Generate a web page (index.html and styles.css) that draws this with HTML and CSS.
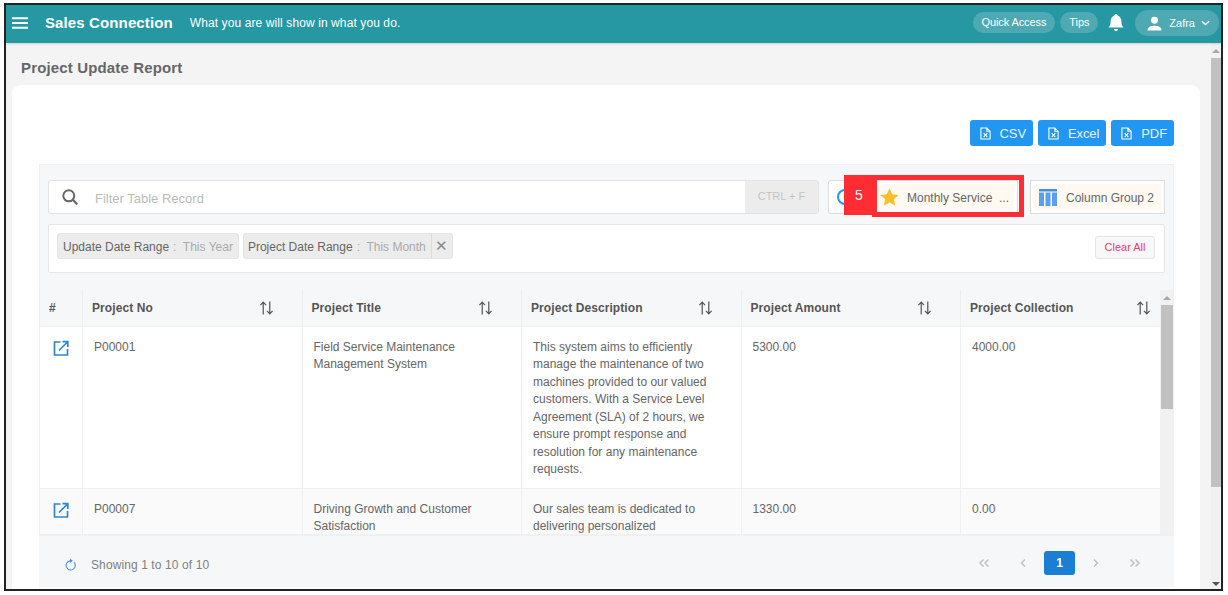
FILE: index.html
```html
<!DOCTYPE html>
<html lang="en">
<head>
    <meta charset="UTF-8">
    <title>Project Update Report</title>
    <link rel="stylesheet" href="styles.css">
</head>
<body>

<svg class="defs" width="0" height="0">
    <symbol id="sort" viewBox="0 0 16 16">
        <path d="M4.5 15V2M1.5 5l3-3.2 3 3.2M11.5 1v13M8.5 11l3 3.2 3-3.2" fill="none" stroke="currentColor" stroke-width="1.3"/>
    </symbol>
    <symbol id="open" viewBox="0 0 16 16">
        <path d="M7.5 1.5H1.5v13h13v-6M6 10l8-8M9.5 1.2h5.3v5.3" fill="none" stroke="currentColor" stroke-width="1.7"/>
    </symbol>
    <symbol id="file" viewBox="0 0 12 14">
        <path d="M1 1h6.5L11 4.5V13H1zM7.5 1v3.5H11" fill="none" stroke="currentColor" stroke-width="1.2"/>
        <path d="M4 6.5l4 4.5M8 6.5l-4 4.5" fill="none" stroke="currentColor" stroke-width="1.2"/>
    </symbol>
    <symbol id="first" viewBox="0 0 11 8">
        <path d="M4.500 .5L1 4l3.500 3.500M9.500 .5L6 4l3.500 3.500" fill="none" stroke="currentColor" stroke-width="1.500"/>
    </symbol>
    <symbol id="prev" viewBox="0 0 11 8">
        <path d="M7 .5L3.500 4 7 7.500" fill="none" stroke="currentColor" stroke-width="1.500"/>
    </symbol>
    <symbol id="next" viewBox="0 0 11 8">
        <path d="M4 .5L7.500 4 4 7.500" fill="none" stroke="currentColor" stroke-width="1.500"/>
    </symbol>
    <symbol id="last" viewBox="0 0 11 8">
        <path d="M1.500 .5L5 4 1.500 7.500M6.500 .5L10 4 6.500 7.500" fill="none" stroke="currentColor" stroke-width="1.500"/>
    </symbol>
</svg>

<div class="frame">
    <header class="topbar">
        <svg class="menu-icon" viewBox="0 0 16 12"><path d="M0 1.2h16M0 6h16M0 10.8h16" stroke="#fff" stroke-width="2"/></svg>
        <span class="brand">Sales Connection</span>
        <span class="tagline">What you are will show in what you do.</span>
        <div class="top-actions">
            <span class="pill">Quick Access</span>
            <span class="pill">Tips</span>
            <svg class="bell" viewBox="0 0 16 18"><path d="M8 0c1 0 1.5.7 1.5 1.5C12 2.300 13.400 4.500 13.400 7.500c0 3 .8 4.700 2.100 6H.5c1.300-1.300 2.100-3 2.100-6 0-3 1.400-5.200 3.900-6C6.500.7 7 0 8 0zM6 15h4a2 2 0 0 1-4 0z" fill="#fff"/></svg>
            <span class="user-pill">
                <svg class="user-icon" viewBox="0 0 16 16"><circle cx="8" cy="4.500" r="3.700" fill="#fff"/><path d="M0.500 15.500c0-3.500 3.500-5 7.500-5s7.500 1.500 7.500 5z" fill="#fff"/></svg>
                Zafra
                <svg class="chevron" viewBox="0 0 10 6"><path d="M1 1l4 3.800L9 1" fill="none" stroke="#fff" stroke-width="1.600"/></svg>
            </span>
        </div>
    </header>

    <div class="page">
        <main class="main">
            <h1 class="page-title">Project Update Report</h1>
            <section class="card">
                <div class="exports">
                    <button class="export-btn"><svg class="file-icon"><use href="#file"/></svg>CSV</button>
                    <button class="export-btn"><svg class="file-icon"><use href="#file"/></svg>Excel</button>
                    <button class="export-btn"><svg class="file-icon"><use href="#file"/></svg>PDF</button>
                </div>

                <div class="panel">
                    <div class="toolbar">
                        <div class="search">
                            <svg class="search-icon" viewBox="0 0 16 16"><circle cx="6.800" cy="6.800" r="5.500" fill="none" stroke="#666" stroke-width="2"/><path d="M10.800 10.800l4.500 4.500" stroke="#666" stroke-width="2.200"/></svg>
                            <span class="search-text">Filter Table Record</span>
                            <span class="shortcut">CTRL + F</span>
                        </div>
                        <div class="view-btn view-clock"><span class="clock-dot"></span></div>
                        <div class="view-btn view-monthly">
                            <span class="view-inner">
                                <svg class="star" viewBox="0 0 20 19"><path d="M10 .5l2.900 6 6.600.9-4.800 4.600 1.200 6.500L10 15.400l-5.900 3.100 1.200-6.500L.5 7.400l6.600-.9z" fill="#fbbf2d"/></svg>
                                Monthly Service&nbsp; ...
                            </span>
                        </div>
                        <div class="view-btn view-columns">
                            <span class="view-inner">
                                <svg class="columns-icon" viewBox="0 0 18 17"><path d="M0 0h18v2.500H0z" fill="#3f8fe8"/><path d="M0 3.500h5V17H0zM6.500 3.500h5V17h-5zM13 3.500h5V17h-5z" fill="#5a9ff0"/></svg>
                                Column Group 2
                            </span>
                        </div>
                        <div class="step-badge">5</div>
                        <div class="step-box"></div>
                    </div>

                    <div class="filters">
                        <span class="chip">Update Date Range<span class="chip-value">:&nbsp; This Year</span></span>
                        <span class="chip chip-close">
                            <span class="chip-label">Project Date Range<span class="chip-value">:&nbsp; This Month</span></span>
                            <span class="chip-x">✕</span>
                        </span>
                        <button class="clear-btn">Clear All</button>
                    </div>
                </div>

                <div class="table-area">
                    <div class="table-clip">
                        <table class="report">
                            <colgroup>
                                <col class="col-id">
                                <col class="col-data">
                                <col class="col-data">
                                <col class="col-data">
                                <col class="col-data">
                                <col class="col-last">
                            </colgroup>
                            <thead>
                                <tr>
                                    <th>#</th>
                                    <th><div class="th-inner">Project No<svg class="sort"><use href="#sort"/></svg></div></th>
                                    <th><div class="th-inner">Project Title<svg class="sort"><use href="#sort"/></svg></div></th>
                                    <th><div class="th-inner">Project Description<svg class="sort"><use href="#sort"/></svg></div></th>
                                    <th><div class="th-inner">Project Amount<svg class="sort"><use href="#sort"/></svg></div></th>
                                    <th><div class="th-inner">Project Collection<svg class="sort"><use href="#sort"/></svg></div></th>
                                </tr>
                            </thead>
                            <tbody>
                                <tr>
                                    <td class="cell-open"><svg class="open-icon"><use href="#open"/></svg></td>
                                    <td>P00001</td>
                                    <td>Field Service Maintenance Management System</td>
                                    <td>This system aims to efficiently manage the maintenance of two machines provided to our valued customers. With a Service Level Agreement (SLA) of 2 hours, we ensure prompt response and resolution for any maintenance requests.</td>
                                    <td>5300.00</td>
                                    <td>4000.00</td>
                                </tr>
                                <tr class="row-alt">
                                    <td class="cell-open"><svg class="open-icon"><use href="#open"/></svg></td>
                                    <td>P00007</td>
                                    <td>Driving Growth and Customer Satisfaction</td>
                                    <td>Our sales team is dedicated to delivering personalized</td>
                                    <td>1330.00</td>
                                    <td>0.00</td>
                                </tr>
                            </tbody>
                        </table>
                    </div>
                    <div class="table-scroll">
                        <span class="arrow-up"></span>
                        <span class="table-thumb"></span>
                    </div>
                </div>

                <footer class="table-footer">
                    <svg class="refresh" viewBox="0 0 12 13"><path d="M9.800 4A5 5 0 1 1 6 2.500" fill="none" stroke="#4a90d9" stroke-width="1.200"/><path d="M5.500 0l3 2.500-3 2.300z" fill="#4a90d9"/></svg>
                    <span class="showing">Showing 1 to 10 of 10</span>
                    <nav class="pager">
                        <span class="pg"><svg class="pg-icon"><use href="#first"/></svg></span>
                        <span class="pg"><svg class="pg-icon"><use href="#prev"/></svg></span>
                        <span class="pg-active">1</span>
                        <span class="pg"><svg class="pg-icon"><use href="#next"/></svg></span>
                        <span class="pg"><svg class="pg-icon"><use href="#last"/></svg></span>
                    </nav>
                </footer>
            </section>
        </main>

        <div class="page-scroll">
            <span class="arrow-up"></span>
            <span class="page-thumb"></span>
            <span class="arrow-down"></span>
        </div>
    </div>
</div>

</body>
</html>
```

FILE: styles.css
```css
/* Page frame */
* {
    box-sizing: border-box;
}

body {
    margin: 0;
    height: 595px;
    overflow: hidden;
    background: #fff;
    font-family: 'Liberation Sans', Arial, sans-serif;
    font-size: 12px;
    color: #666;
}

.defs {
    position: absolute;
}

.frame {
    display: flex;
    flex-direction: column;
    width: 1219px;
    height: 588px;
    margin: 3px 0 0 4px;
    border: 2px solid #222;
    overflow: hidden;
}

/* Top bar */
.topbar {
    display: flex;
    align-items: center;
    flex: 0 0 38px;
    padding: 0 2px 3px 6px;
    background: #2698a3;
    color: #fff;
    box-shadow: 0 1px 2px rgba(0, 0, 0, 0.15);
    z-index: 1;
}

.menu-icon {
    width: 16px;
    height: 12px;
}

.brand {
    margin-left: 17px;
    font-size: 15px;
    font-weight: bold;
    letter-spacing: 0.12px;
}

.tagline {
    margin-left: 17px;
    font-size: 12px;
    letter-spacing: 0.1px;
}

.top-actions {
    display: flex;
    align-items: center;
    margin-left: auto;
}

.pill {
    height: 21px;
    line-height: 21px;
    margin-right: 5px;
    padding: 0 9px;
    border-radius: 11px;
    background: #4ea9b2;
    font-size: 11px;
    letter-spacing: -0.1px;
}

.bell {
    width: 16px;
    height: 18px;
    margin: 0 11px 0 5px;
}

.user-pill {
    display: flex;
    align-items: center;
    height: 26px;
    margin-top: 1px;
    padding: 0 9px 0 12px;
    border-radius: 13px;
    background: #4ea9b2;
    font-size: 11px;
}

.user-icon {
    width: 15px;
    height: 15px;
    margin-right: 7px;
}

.chevron {
    width: 9px;
    height: 6px;
    margin-left: 6px;
}

/* Page body */
.page {
    display: flex;
    flex: 1;
    min-height: 0;
}

.main {
    flex: 1;
    min-width: 0;
    padding: 0 11px 0 6px;
    background: #f4f4f4;
}

.page-title {
    height: 42px;
    margin: 0;
    padding: 16px 0 0 9px;
    font-size: 15px;
    line-height: 18px;
    letter-spacing: 0.15px;
    color: #666;
}

.card {
    height: 510px;
    padding: 35px 26px 0 27px;
    border-radius: 9px 9px 0 0;
    background: #fff;
}

.exports {
    display: flex;
    justify-content: flex-end;
    gap: 5px;
    margin-bottom: 18px;
}

.export-btn {
    display: flex;
    align-items: center;
    height: 26px;
    padding: 0 7px 0 10px;
    border: 0;
    border-radius: 3px;
    background: #2196f3;
    color: #e6f3fe;
    font-family: inherit;
    font-size: 13px;
    letter-spacing: -0.1px;
}

.file-icon {
    width: 11px;
    height: 13px;
    margin-right: 9px;
    color: #fff;
}

/* Search and filter panel */
.panel {
    height: 126px;
    padding: 15px 8px 0;
    background: #f6f7f9;
    border: 1px solid #eff0f2;
    border-bottom: 0;
}

.toolbar {
    position: relative;
    display: flex;
    height: 34px;
}

.search {
    display: flex;
    align-items: center;
    width: 771px;
    border: 1px solid #e2e3e5;
    border-radius: 3px;
    background: #fff;
}

.search-icon {
    width: 16px;
    height: 16px;
    margin-left: 13px;
}

.search-text {
    flex: 1;
    margin-top: 2px;
    margin-left: 17px;
    font-size: 13px;
    color: #bbb;
}

.shortcut {
    align-self: stretch;
    width: 73px;
    padding-top: 9px;
    background: #ececec;
    color: #c4c4c4;
    font-size: 11px;
    text-align: center;
}

.view-btn {
    padding: 3px;
    border: 1px solid #ddd;
    background: #fff;
}

.view-inner {
    display: flex;
    align-items: center;
    height: 100%;
    padding-top: 2px;
    background: #fff9f1;
    color: #666;
}

.view-clock {
    width: 44px;
    margin-left: 9px;
    border-radius: 3px;
}

.clock-dot {
    display: block;
    width: 16px;
    height: 16px;
    margin: 5px 0 0 5px;
    border: 2px solid #2196f3;
    border-radius: 50%;
}

.view-monthly {
    width: 146px;
}

.view-monthly .star {
    width: 19px;
    height: 18px;
    margin: -2px 8px 0 4px;
}

.view-columns {
    width: 135px;
    margin-left: 12px;
}

.columns-icon {
    width: 18px;
    height: 17px;
    margin: -2px 9px 0 5px;
}

/* Annotation over the toolbar */
.step-badge {
    position: absolute;
    left: 796px;
    top: -5px;
    width: 31px;
    height: 40px;
    padding-top: 12px;
    padding-right: 1px;
    background: #ff2d33;
    color: #fff;
    font-size: 14px;
    text-align: center;
}

.step-box {
    position: absolute;
    left: 824px;
    top: -5px;
    width: 152px;
    height: 42px;
    border: 5px solid #ff2d33;
}

.filters {
    display: flex;
    align-items: flex-start;
    gap: 4px;
    height: 49px;
    margin-top: 10px;
    padding: 8px 9px 8px 8px;
    border: 1px solid #e6e7e9;
    border-radius: 2px;
    background: #fff;
}

.chip {
    height: 26px;
    line-height: 26px;
    padding: 0 5px;
    border: 1px solid #e4e4e4;
    border-radius: 3px;
    background: #ececec;
    white-space: nowrap;
}

.chip-value {
    margin-left: 4px;
    color: #aaa;
}

.chip-close {
    display: flex;
    padding: 0;
}

.chip-label {
    padding: 0 5px 0 4px;
}

.chip-x {
    width: 21px;
    border-left: 1px solid #dcdcdc;
    line-height: 24px;
    color: #888;
    font-size: 15px;
    text-align: center;
}

.clear-btn {
    width: 60px;
    height: 23px;
    margin: 3px 0 0 auto;
    padding: 0 0 2px;
    border: 1px solid #e4e4e4;
    border-radius: 3px;
    background: #f8f8f9;
    color: #f0386b;
    font-family: inherit;
    font-size: 11px;
}

/* Report table */
.table-area {
    display: flex;
    height: 244px;
}

.table-clip {
    width: 1121px;
    height: 244px;
    overflow: hidden;
}

.report {
    width: 1121px;
    border-collapse: collapse;
    table-layout: fixed;
}

.col-id {
    width: 43px;
}

.col-data {
    width: 219.5px;
}

.col-last {
    width: 200px;
}

.report th {
    height: 36px;
    padding: 0 9px;
    background: #f6f7f9;
    border: 1px solid #eceef0;
    border-top: 0;
    font-size: 12px;
    letter-spacing: 0.08px;
    color: #555;
    text-align: left;
}

.th-inner {
    display: flex;
    align-items: center;
    justify-content: space-between;
    padding-right: 19px;
}

.report th:last-child .th-inner {
    padding-right: 0;
}

.sort {
    width: 15px;
    height: 16px;
    color: #555;
}

.report td {
    padding: 12px 12px 9px 11px;
    border: 1px solid #eef0f2;
    border-top: 0;
    font-size: 12px;
    line-height: 17.5px;
    vertical-align: top;
    color: #666;
}

.row-alt td {
    background: #fafafa;
}

.report .cell-open {
    padding: 13px 0 0 13px;
}

.open-icon {
    display: block;
    width: 16px;
    height: 17px;
    color: #2f86cf;
}

.table-scroll {
    display: flex;
    flex-direction: column;
    align-items: center;
    flex: 0 0 14px;
    padding-top: 6px;
    background: #f1f1f1;
}

.table-thumb {
    width: 12px;
    height: 104px;
    margin-top: 5px;
    background: #c1c1c1;
}

.arrow-up {
    border: 4px solid transparent;
    border-top: 0;
    border-bottom: 4px solid #a8a8a8;
}

.arrow-down {
    margin-top: auto;
    margin-bottom: 3px;
    border: 4px solid transparent;
    border-bottom: 0;
    border-top: 4px solid #505050;
}

/* Table footer */
.table-footer {
    display: flex;
    align-items: center;
    height: 53px;
    padding: 3px 20px 0 26px;
    background: #f6f7f9;
    border-top: 2px solid #eff0f2;
}

.refresh {
    width: 11px;
    height: 13px;
    margin-top: 2px;
}

.showing {
    margin-top: 4px;
    margin-left: 15px;
    letter-spacing: 0.1px;
    color: #808080;
}

.pager {
    display: flex;
    align-items: center;
    margin-left: auto;
}

.pg {
    display: flex;
    justify-content: center;
    width: 39px;
    color: #c0c0c0;
}

.pg-icon {
    width: 11px;
    height: 8px;
}

.pg-active {
    width: 31px;
    height: 24px;
    margin: 0 1px;
    line-height: 24px;
    border-radius: 3px;
    background: #1a7fd4;
    color: #fff;
    font-weight: bold;
    text-align: center;
}

/* Page scrollbar */
.page-scroll {
    display: flex;
    flex-direction: column;
    align-items: center;
    flex: 0 0 10px;
    padding-top: 6px;
    background: #f1f1f1;
}

.page-thumb {
    width: 10px;
    height: 429px;
    margin-top: 5px;
    background: #c1c1c1;
}
```
